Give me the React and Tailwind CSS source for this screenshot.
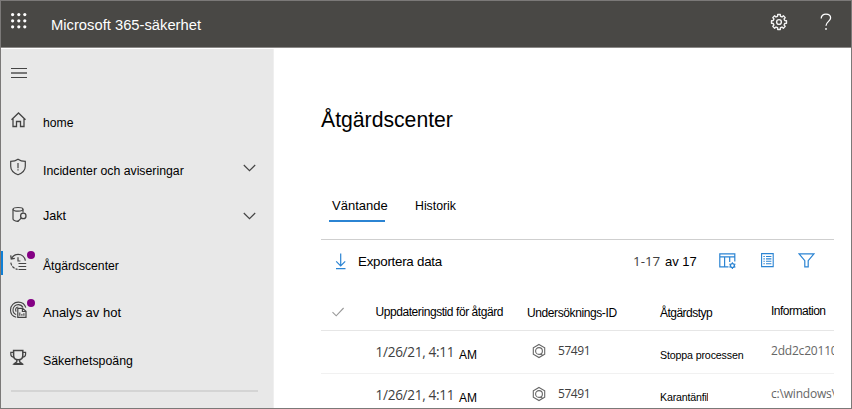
import React from "react";

const ARIAL = "font-['Liberation_Sans',Arial,sans-serif] whitespace-nowrap text-black";
const SEGOE = "font-['Open_Sans','Noto_Sans',sans-serif] whitespace-nowrap text-[#404040]";

function Icon({ children, className, size = 18 }) {
  return (
    <svg
      width={size}
      height={size}
      viewBox={`0 0 ${size} ${size}`}
      fill="none"
      stroke="currentColor"
      strokeWidth="1.1"
      className={`block shrink-0 overflow-visible ${className || ""}`}
    >
      {children}
    </svg>
  );
}

const Waffle = () => (
  <Icon size={16} className="text-white">
    {[1.6, 7.8, 13.8].map((y) =>
      [1.6, 7.8, 13.8].map((x) => (
        <circle key={`${x}-${y}`} cx={x} cy={y} r="1.6" fill="currentColor" stroke="none" />
      ))
    )}
  </Icon>
);

function gearPath(cx, cy, outer, inner, teeth) {
  const points = [];
  for (let i = 0; i < teeth; i++) {
    const s = (Math.PI * 2) / teeth;
    const a = i * s;
    [
      [-0.32, inner],
      [-0.22, outer],
      [0.22, outer],
      [0.32, inner],
    ].forEach(([o, r]) => {
      points.push(`${(cx + Math.cos(a + o * s) * r).toFixed(2)} ${(cy + Math.sin(a + o * s) * r).toFixed(2)}`);
    });
  }
  return `M${points.join("L")}Z`;
}

const Gear = () => (
  <Icon size={18} className="text-[#f2f2f2]">
    <path d={gearPath(9, 9, 7.6, 5.9, 8)} strokeLinejoin="round" strokeWidth="1.4" />
    <circle cx="9" cy="9" r="2.4" strokeWidth="1.4" />
  </Icon>
);

const Help = () => (
  <Icon size={18} className="text-white">
    <path d="M4.2 5.4C4.2 2.8 6.2 1.2 8.9 1.2C11.6 1.2 13.6 2.8 13.6 5.1C13.6 8.3 9 8.6 9 12.8" strokeWidth="1.3" />
    <circle cx="9" cy="15.9" r="0.95" fill="currentColor" stroke="none" />
  </Icon>
);

const HomeIcon = () => (
  <Icon>
    <path d="M2.5 8.7L9.5 2L16.5 8.7M4 7.5V15.5H7.5V10.5H11.5V15.5H15V7.5" strokeWidth="1.3" />
  </Icon>
);

const ShieldIcon = () => (
  <Icon>
    <path d="M9 1.3C7.1 2.7 4.6 3.4 1.7 3.4V8.2C1.7 12.2 4.7 15 9 16.7C13.3 15 16.3 12.2 16.3 8.2V3.4C13.4 3.4 10.9 2.7 9 1.3Z" strokeWidth="1.2" />
    <path d="M9 5V10.3M9 11.3V12.6" strokeWidth="1.2" />
  </Icon>
);

const HuntIcon = () => (
  <Icon>
    <ellipse cx="9" cy="3.3" rx="5" ry="1.8" strokeWidth="1.2" />
    <path d="M4 3.3V12.8C4 14.2 5.6 15 8.6 15.3L9.6 14.4M14 3.3V6.6" strokeWidth="1.2" />
    <circle cx="14.3" cy="9.9" r="2.7" strokeWidth="1.3" />
    <path d="M12.4 11.9L8.8 15.6" strokeWidth="1.3" />
  </Icon>
);

const ActionIcon = () => (
  <Icon>
    <path d="M2.4 5.6C3.8 2.9 6.2 1.4 9.1 1.4C12.8 1.4 15.8 4 16.4 7.6" strokeWidth="1.3" />
    <path d="M1.7 2.4L2.3 6L5.8 5.4" strokeWidth="1.3" />
    <path d="M1.8 9.6C2.4 13 5 15.8 8.6 16.4" strokeWidth="1.2" strokeDasharray="3 1" />
    <path d="M9 4.3V8H11.4M9.5 10.5H17.2M9.5 13.5H17.2M9.5 16.5H17.2" strokeWidth="1.2" />
  </Icon>
);

const ThreatIcon = () => (
  <Icon>
    <path d="M7.2 16.2C3.8 15.3 1.5 12.4 1.5 8.9C1.5 4.5 5 1.1 9.3 1.1C12.9 1.1 15.9 3.4 16.8 6.7" />
    <path d="M7.2 13.6C5.3 12.8 4 11 4 8.9C4 5.9 6.4 3.6 9.3 3.6C11.4 3.6 13.1 4.7 14 6.4" />
    <path d="M7.2 10.6C5.7 8.4 7.1 6 9.3 6" />
    <path d="M8.8 7.4H13.6L17 10.3V16.4H8.8ZM13.4 7.4V10.5H17" strokeWidth="1.2" />
    <path d="M10.8 14.7V11.6M12.9 14.7V13M14.9 14.7V12.2" />
  </Icon>
);

const TrophyIcon = () => (
  <Icon>
    <path d="M4.6 1.6H13.8V6.2C13.8 9.2 12 10.8 9.2 10.8C6.4 10.8 4.6 9.2 4.6 6.2Z" strokeWidth="1.5" />
    <path d="M4.4 3.3H1.8V5.3C1.8 7.1 3.2 8.1 5 8.1M14 3.3H16.6V5.3C16.6 7.1 15.2 8.1 13.4 8.1" strokeWidth="1.2" />
    <path d="M7.8 10.8V12.8L5.2 14.8H13.2L10.6 12.8V10.8M4.4 15.2H14" strokeWidth="1.4" />
  </Icon>
);

const Chevron = () => (
  <svg width="13" height="8" viewBox="0 0 13 8" fill="none" stroke="#444" strokeWidth="1.2" className="block">
    <path d="M0.8 1L6.5 6.7L12.2 1" />
  </svg>
);

const Hexagon = () => (
  <Icon size={14} className="text-[#666]">
    <path d="M7 0.5L12.7 3.7V10.3L7 13.5L1.3 10.3V3.7Z" />
    <circle cx="7" cy="7" r="3.4" />
    <path d="M8.2 10L11 11.6" />
  </Icon>
);

const NAV = [
  { label: "home", Glyph: HomeIcon, row: "h-[46px]", icon: "pt-0", text: "pt-[4px] text-[12.2px]" },
  { label: "Incidenter och aviseringar", Glyph: ShieldIcon, row: "h-[48px]", icon: "pt-px", text: "pt-[6px] text-[12.3px]", open: true },
  { label: "Jakt", Glyph: HuntIcon, row: "h-[46px]", icon: "pt-px", text: "pt-[3px] text-[12.6px]", open: true },
  { label: "Åtgärdscenter", Glyph: ActionIcon, row: "h-[48px]", icon: "pt-[2px]", text: "pt-[7px] text-[12.2px]", dot: true, current: true },
  { label: "Analys av hot", Glyph: ThreatIcon, row: "h-[49px]", icon: "pt-[2px]", text: "pt-[6px] text-[13px]", dot: true },
  { label: "Säkerhetspoäng", Glyph: TrophyIcon, row: "h-[42px]", icon: "pt-px", text: "pt-[5px] text-[12.35px]" },
];

function NavRow({ item }) {
  const { Glyph } = item;
  return (
    <div className={`flex items-start ${item.row}`}>
      <div className={`h-[24px] w-[2px] ${item.current ? "bg-[#0f7fd6]" : ""}`} />
      <div className={`relative ml-[6.4px] w-[33.6px] text-[#444] ${item.icon}`}>
        <Glyph />
        {item.dot && <span className="absolute left-[17.6px] top-0 size-[8px] rounded-full bg-[#840084]" />}
      </div>
      <span className={`${ARIAL} flex-1 leading-4 ${item.text}`}>{item.label}</span>
      {item.open && (
        <div className="pt-[6.6px] pr-[17px]">
          <Chevron />
        </div>
      )}
    </div>
  );
}

const ExportIcon = () => (
  <svg width="12" height="17" viewBox="0 0 12 17" fill="none" stroke="#2b84d3" strokeWidth="1.2" className="block">
    <path d="M5.7 0.5V12.8M1.2 8.3L5.7 12.8L10.2 8.3M1 15.6H10.5" />
  </svg>
);

const ColumnsIcon = () => (
  <Icon size={17} className="text-[#2b84d3]">
    <path d="M9.5 13.8H0.8V0.9H15.8V8.5M0.8 3.9H15.8M5.6 3.9V13.8M10.7 3.9V9" strokeWidth="1.2" />
    <circle cx="13.4" cy="12.6" r="2" strokeWidth="1.4" />
    <path d="M13.4 9.2V10.4M13.4 14.8V16M10.4 10.9L11.5 11.5M15.3 13.7L16.4 14.3M10.4 14.3L11.5 13.7M15.3 11.5L16.4 10.9" />
  </Icon>
);

const ListIcon = () => (
  <svg width="13" height="15" viewBox="0 0 13 15" fill="none" stroke="#2b84d3" strokeWidth="1.1" className="block">
    <path d="M0.6 0.6H12.2V13.6H0.6Z" />
    <path d="M2.4 3.5H3.8M5 3.5H10.4M2.4 5.9H3.8M5 5.9H10.4M2.4 8.3H3.8M5 8.3H10.4M2.4 10.7H3.8M5 10.7H10.4" />
  </svg>
);

const FilterIcon = () => (
  <svg width="17" height="15" viewBox="0 0 17 15" fill="none" stroke="#2b84d3" strokeWidth="1.2" className="block">
    <path d="M1 0.8H16L10.2 7.6V13.9H6.8V7.6Z" />
  </svg>
);

const ROWS = [
  { type: "Stoppa processen", info: "2dd2c20110", row: "h-[43px]", typeText: "pt-[16px] tracking-[-0.15px]", infoText: "tracking-[-0.2px]" },
  { type: "Karantänfil", info: "c:\\windows\\", row: "h-[44px]", typeText: "pt-[15px] w-[48px] overflow-hidden tracking-[-0.2px]", infoText: "tracking-[-0.2px]" },
];

const COLS = "grid grid-cols-[54px_152px_133px_111px_63px]";

function ActionRow({ row }) {
  return (
    <div className={`${COLS} border-b border-[#f1f1f1] ${row.row}`}>
      <span />
      <div className="flex pl-[0.6px]">
        <span className={`${SEGOE} w-[83.5px] pt-[11px] text-[13.6px] leading-5 tracking-[-0.32px]`}>1/26/21, 4:11</span>
        <span className={`${ARIAL} pt-[16px] text-[12px] leading-4`}>AM</span>
      </div>
      <div className="flex pl-[5px]">
        <div className="w-[26px] pt-[13px]">
          <Hexagon />
        </div>
        <span className={`${SEGOE} pt-[11px] text-[12px] leading-[18px] tracking-[-0.45px]`}>57491</span>
      </div>
      <span className={`${ARIAL} text-[10.67px] leading-4 ${row.typeText}`}>{row.type}</span>
      <span className={`${SEGOE} !text-[#666] overflow-hidden pt-[11px] text-[12px] leading-[18px] ${row.infoText}`}>{row.info}</span>
    </div>
  );
}

export default function App() {
  return (
    <div className="flex h-[409px] w-[852px] flex-col overflow-hidden border border-[#7b7978] bg-white">
      <header className="flex h-[46px] shrink-0 items-start bg-[#494845]">
        <div className="w-[50px] pt-[12px] pl-[9.5px]">
          <Waffle />
        </div>
        <span className={`${ARIAL} !text-white flex-1 pt-[15px] text-[14.75px] leading-[19px]`}>Microsoft 365-säkerhet</span>
        <div className="w-[47px] pt-[12px]">
          <Gear />
        </div>
        <div className="w-[34px] pt-[12px]">
          <Help />
        </div>
      </header>
      <div className="h-px shrink-0 bg-[#8b8987]" />

      <div className="flex min-h-0 flex-1 pt-px">
        <nav className="w-[273px] shrink-0 border-r border-[#efefef] bg-[#e8e8e8]">
          <div className="flex h-[62px] flex-col pt-[19px] pl-[10px]">
            <span className="h-px w-4 bg-[#444]" />
            <span className="mt-[3px] h-[2px] w-4 bg-[#777]" />
            <span className="mt-[3px] h-px w-4 bg-[#444]" />
          </div>
          {NAV.map((item) => (
            <NavRow key={item.label} item={item} />
          ))}
          <div className="ml-[10px] h-[2px] w-[247px] bg-[#d4d4d4]" />
        </nav>

        <main className="flex-1 pl-[47px]">
          <h1 className={`${ARIAL} h-[146px] pt-[57px] text-[21.2px] leading-7`}>Åtgärdscenter</h1>
          <div className="flex h-[44px] items-start pl-[8px]">
            <div className="h-[27px] w-[56px] border-b-2 border-[#2b84d3] pl-[3px]">
              <span className={`${ARIAL} block pt-[3px] text-[13px] leading-4`}>Väntande</span>
            </div>
            <span className={`${ARIAL} pl-[30px] pt-[3px] text-[12.3px] leading-4`}>Historik</span>
          </div>

          <section className="w-[513px] border-t border-[#cfcfcf]">
            <div className="flex h-[48px] items-start pl-[14px]">
              <div className="w-[23px] pt-[13px]">
                <ExportIcon />
              </div>
              <span className={`${ARIAL} flex-1 pt-[14px] text-[13.33px] leading-4 tracking-[-0.25px]`}>Exportera data</span>
              <span className={`${SEGOE} w-[32px] pt-[11px] text-[13.4px] leading-5`}>1-17</span>
              <span className={`${ARIAL} w-[54px] pt-[14px] text-[13px] leading-4`}>av 17</span>
              <div className="w-[42px] pt-[13px]">
                <ColumnsIcon />
              </div>
              <div className="w-[37px] pt-[13px]">
                <ListIcon />
              </div>
              <div className="w-[36px] pt-[13px]">
                <FilterIcon />
              </div>
            </div>

            <div className={`${COLS} h-[43px] border-b border-[#e6e6e6] text-[12px] leading-4`}>
              <div className="pl-[11px] pt-[19px]">
                <svg width="12" height="10" viewBox="0 0 12 10" fill="none" stroke="#999" strokeWidth="1.1">
                  <path d="M0.5 5.2L4.2 8.8L11.6 1" />
                </svg>
              </div>
              <span className={`${ARIAL} pt-[16px] pl-[0.5px] tracking-[-0.43px]`}>Uppdateringstid för åtgärd</span>
              <span className={`${ARIAL} pt-[17px] tracking-[-0.4px]`}>Undersöknings-ID</span>
              <span className={`${ARIAL} pt-[17px] tracking-[-0.53px]`}>Åtgärdstyp</span>
              <span className={`${ARIAL} pt-[15px] tracking-[-0.5px]`}>Information</span>
            </div>

            {ROWS.map((row) => (
              <ActionRow key={row.type} row={row} />
            ))}
          </section>
        </main>
      </div>
    </div>
  );
}
